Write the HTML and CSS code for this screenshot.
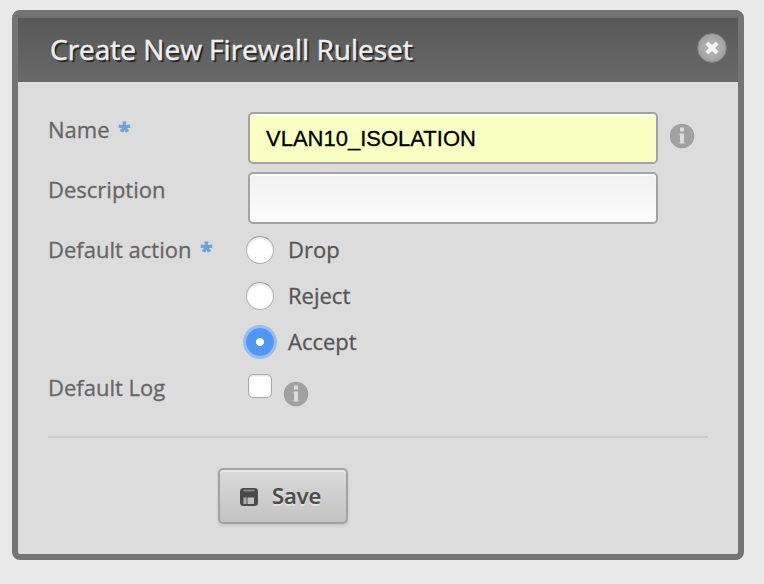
FILE: index.html
```html
<!DOCTYPE html>
<html lang="en">
<head>
<meta charset="utf-8">
<title>Create New Firewall Ruleset</title>
<link rel="stylesheet" href="styles.css">
</head>
<body>
<svg class="defs" width="0" height="0" aria-hidden="true">
  <symbol id="info" viewBox="0 0 26 26">
    <circle cx="13" cy="13" r="12.300" fill="#a1a1a1"/>
    <path d="M11 4.500h4v4h-4zM11 10.500h4V20.500h-4z" fill="#dcdcdc"/>
    <path d="M9.500 10.500H11v2H9.500zM9.500 19H11v1.500H9.500zM15 19h1.500v1.500H15z" fill="#b4b4b4"/>
  </symbol>
</svg>
<section class="dialog">
  <header class="dialog-header">
    <h1>Create New Firewall Ruleset</h1>
    <button class="close" type="button" aria-label="Close">
      <svg width="16" height="16" viewBox="0 0 16 16"><path d="M3 3l10 10M13 3L3 13" stroke="#f6f6f6" stroke-width="4"/></svg>
    </button>
  </header>
  <form class="form">
    <div class="row">
      <label class="label" for="name">Name <b>*</b></label>
      <input class="text filled" id="name" type="text" value="VLAN10_ISOLATION">
      <svg class="info"><use href="#info"/></svg>
    </div>
    <div class="row">
      <label class="label" for="desc">Description</label>
      <input class="text" id="desc" type="text">
    </div>
    <div class="row actions">
      <span class="label">Default action <b>*</b></span>
      <div class="options">
        <label><input type="radio" name="action"><span>Drop</span></label>
        <label><input type="radio" name="action"><span>Reject</span></label>
        <label><input type="radio" name="action" checked><span>Accept</span></label>
      </div>
    </div>
    <div class="row log">
      <label class="label" for="log">Default Log</label>
      <input class="check" id="log" type="checkbox">
      <svg class="info"><use href="#info"/></svg>
    </div>
    <div class="footer">
      <button class="save" type="button">
        <svg width="20" height="20" viewBox="0 0 20 20">
          <rect x="1" y="1" width="18" height="18" rx="3.500" fill="#4a4a4a"/>
          <path d="M4.500 3.500h11" stroke="#8c8c8c" stroke-width="1.800"/>
          <path d="M4.500 10.500h2.500v6.500H4.500z" fill="#b0b0b0"/>
          <path d="M7 10.500h2v6.500H7z" fill="#858585"/>
          <path d="M9 10.500h6v6.500H9z" fill="#c0c0c0"/>
        </svg>
        <span>Save</span>
      </button>
    </div>
  </form>
</section>
</body>
</html>
```
FILE: styles.css
```css
* { box-sizing: border-box; }
body {
  margin: 0;
  padding: 10px 20px 24px 12px;
  background: #e9e9e9;
  font-family: "Open Sans", sans-serif;
  font-size: 22px;
  color: #666;
}
.defs { display: block; }
.dialog {
  width: 732px;
  height: 550px;
  border: 6px solid #747474;
  border-radius: 8px;
  background: #dcdcdc;
}
.dialog-header {
  display: flex;
  align-items: center;
  justify-content: space-between;
  height: 66px;
  padding: 0 11px 0 32px;
  border-top: 2px solid #6e6e6e;
  background: linear-gradient(#585858, #696969);
}
h1 {
  margin: 0;
  padding-bottom: 2px;
  font-size: 28px;
  font-weight: 400;
  line-height: 62px;
  color: #eee;
  -webkit-text-stroke: 0.5px #eee;
  text-shadow: 2px 2px 1px #222;
}
.close {
  display: grid;
  place-items: center;
  width: 30px;
  height: 30px;
  margin-bottom: 4px;
  padding: 0;
  border: 1px solid #7e7e7e;
  border-radius: 50%;
  background: radial-gradient(#b6b6b6 20%, #a0a0a0 70%);
}
.close svg { fill: none; }
.form { padding: 30px 30px 0; }
.row {
  display: flex;
  align-items: flex-start;
  height: 60px;
}
.label {
  width: 200px;
  line-height: 34px;
  -webkit-text-stroke: 0.3px;
}
.label b { margin-left: 3px; color: #6aa3d5; -webkit-text-stroke: 0.8px; }
.text {
  width: 410px;
  height: 52px;
  padding: 2px 16px 0;
  border: 2px solid #a3a3a3;
  border-radius: 5px;
  background: linear-gradient(#f1f1f1, #fcfcfc);
  box-shadow: inset 0 2px #fff;
  font: 22px "Liberation Sans", sans-serif;
  color: #000;
}
.text.filled { background: #faffc4; -webkit-text-stroke: 0.3px; }
.info { width: 26px; height: 26px; margin: 11px 0 0 11px; }
.row.actions { height: 138px; }
.options { margin-left: -4px; color: #555; }
.options label {
  display: flex;
  align-items: center;
  height: 46px;
}
.options label:first-child { height: 41px; padding-bottom: 5px; }
.options span { padding-bottom: 2px; -webkit-text-stroke: 0.3px; }
input[type="radio"] {
  appearance: none;
  width: 28px;
  height: 28px;
  margin: 0 14px 0 2px;
  border: 1px solid #b2b2b2;
  border-top-color: #a0a0a0;
  border-radius: 50%;
  background: #fff;
  box-shadow: inset 0 2px 2px #e7e7e7;
}
input[type="radio"]:checked {
  border: 0;
  background: radial-gradient(circle, #fff 3.600px, #5296f4 4.400px);
  box-shadow: 0 0 0 3px #98bcef;
}
.log .check {
  appearance: none;
  width: 24px;
  height: 24px;
  margin: 4px 0 0;
  border: 1px solid #aaa;
  border-radius: 5px;
  background: #fff;
  box-shadow: inset 0 1px 2px #ddd;
}
.footer {
  margin-top: 6px;
  padding: 30px 0 0 170px;
  border-top: 2px solid #cbcbcb;
}
.save {
  display: flex;
  align-items: center;
  width: 130px;
  height: 56px;
  padding: 0 0 0 19px;
  gap: 13px;
  border: 2px solid #a2a2a2;
  border-radius: 5px;
  background: linear-gradient(#dadada, #c3c3c3);
  box-shadow: inset 0 2px #e9e9e9, 0 2px 3px #c9c9c9;
  font: 600 22px "Open Sans", sans-serif;
  color: #4b4b4b;
  text-shadow: 0 2px #e2e2e2;
}
.save svg { margin-top: 2px; }
.save span { padding-bottom: 2px; -webkit-text-stroke: 0.2px; }
```
